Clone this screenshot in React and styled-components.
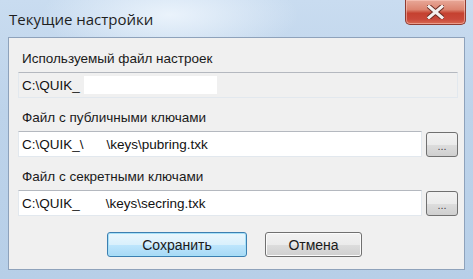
import React from "react";
import styled, { createGlobalStyle } from "styled-components";

const GlobalStyle = createGlobalStyle`
  html, body {
    margin: 0;
    padding: 0;
    background: #ffffff;
  }
  body {
    font-family: "Liberation Sans", Arial, sans-serif;
  }
`;

const Window = styled.div`
  width: 473px;
  height: 279px;
  box-sizing: border-box;
  display: flex;
  flex-direction: column;
  padding: 0 8px 9px 8px;
  background: linear-gradient(180deg, #c9dcf0 0%, #bdd3ea 40%, #b7cfe8 100%);
  overflow: hidden;
  position: relative;
`;

const Glow = styled.div`
  position: absolute;
  left: 40px;
  top: -30px;
  width: 260px;
  height: 90px;
  background: radial-gradient(ellipse at center, rgba(236, 244, 252, 0.95) 0%, rgba(236, 244, 252, 0) 70%);
  pointer-events: none;
`;

const TitleBar = styled.div`
  height: 37px;
  display: flex;
  justify-content: space-between;
  align-items: flex-start;
  position: relative;
`;

const Title = styled.div`
  margin-top: 9px;
  margin-left: 1px;
  font-family: "Open Sans", "Noto Sans", sans-serif;
  font-size: 15px;
  line-height: 20px;
  color: #1e1e1e;
`;

const CloseButton = styled.div`
  width: 61px;
  height: 25px;
  margin-right: -1px;
  box-sizing: border-box;
  border: 1px solid #8f3b30;
  border-top: none;
  border-radius: 0 0 5px 5px;
  background: linear-gradient(180deg, #e8a898 0%, #dc8470 40%, #c54130 55%, #c9483a 80%, #d86a52 100%);
  box-shadow: inset 0 0 0 1px rgba(255, 210, 200, 0.5);
  display: flex;
  align-items: center;
  justify-content: center;
`;

const Client = styled.div`
  flex: 1;
  background: #f0f0f0;
  border: 1px solid #8ea2bb;
  display: flex;
  flex-direction: column;
  padding: 11px 6px 0 9px;
  position: relative;
`;

const Section = styled.div`
  display: flex;
  flex-direction: column;
  margin-bottom: 10px;
`;

const Label = styled.div`
  height: 20px;
  line-height: 20px;
  padding-left: 4px;
  margin-bottom: 3px;
  font-size: 13.5px;
  color: #1a1a1a;
  white-space: nowrap;
`;

const FieldRow = styled.div`
  display: flex;
  align-items: center;
  gap: 4px;
`;

const Field = styled.div`
  flex: 1;
  height: 26px;
  box-sizing: border-box;
  border: 1px solid #e2e8ee;
  border-top-color: #b4b8bf;
  background: ${(p) => (p.$readOnly ? "#f0f0f0" : "#ffffff")};
  display: flex;
  align-items: center;
  padding-left: 3px;
  font-size: 13.5px;
  color: #111;
  white-space: nowrap;
  overflow: hidden;
`;

const Redact = styled.span`
  display: inline-block;
  width: ${(p) => p.$w}px;
  height: 18px;
  margin-left: ${(p) => p.$ml || 0}px;
  background: ${(p) => (p.$white ? "#ffffff" : "transparent")};
`;

const BrowseButton = styled.button`
  width: 32px;
  height: 25px;
  box-sizing: border-box;
  border: 1px solid #707070;
  border-radius: 3px;
  background: linear-gradient(180deg, #f2f2f2 0%, #ebebeb 50%, #dddddd 51%, #cfcfcf 100%);
  font-family: "Liberation Sans", sans-serif;
  font-size: 11px;
  color: #444;
  padding: 0;
  padding-top: 3px;
  line-height: 12px;
`;

const ButtonRow = styled.div`
  display: flex;
  gap: 18px;
  padding-left: 89px;
  margin-top: 6px;
`;

const DialogButton = styled.button`
  width: ${(p) => p.$w}px;
  height: 25px;
  box-sizing: border-box;
  border: 1px solid ${(p) => (p.$default ? "#3c7fb1" : "#707070")};
  border-radius: 3px;
  background: ${(p) =>
    p.$default
      ? "linear-gradient(180deg, #eaf6fd 0%, #d9f0fc 50%, #bee6fd 51%, #a7d9f5 100%)"
      : "linear-gradient(180deg, #f2f2f2 0%, #ebebeb 50%, #dddddd 51%, #cfcfcf 100%)"};
  box-shadow: ${(p) => (p.$default ? "inset 0 0 0 1px #a6e0f8" : "inset 0 0 0 1px #fbfbfb")};
  font-family: "Liberation Sans", sans-serif;
  font-size: 14px;
  color: #1a1a1a;
  padding: 0;
`;

const CloseIcon = () => (
  <svg width="17" height="14" viewBox="0 0 17 14">
    <path
      d="M2 1.5 L15 12.5 M15 1.5 L2 12.5"
      stroke="#6b2a22"
      strokeWidth="5"
      strokeLinecap="square"
      fill="none"
    />
    <path
      d="M2 1.5 L15 12.5 M15 1.5 L2 12.5"
      stroke="#f4f0ee"
      strokeWidth="3"
      strokeLinecap="square"
      fill="none"
    />
  </svg>
);

export default function App() {
  return (
    <>
      <GlobalStyle />
      <Window>
        <Glow />
        <TitleBar>
          <Title>Текущие настройки</Title>
          <CloseButton>
            <CloseIcon />
          </CloseButton>
        </TitleBar>
        <Client>
          <Section>
            <Label>Используемый файл настроек</Label>
            <FieldRow>
              <Field $readOnly>
                C:\QUIK_<Redact $w={133} $ml={4} $white />
              </Field>
            </FieldRow>
          </Section>
          <Section>
            <Label>Файл с публичными ключами</Label>
            <FieldRow>
              <Field>
                C:\QUIK_\<Redact $w={23} />\keys\pubring.txk
              </Field>
              <BrowseButton>...</BrowseButton>
            </FieldRow>
          </Section>
          <Section>
            <Label>Файл с секретными ключами</Label>
            <FieldRow>
              <Field>
                C:\QUIK_<Redact $w={26} />\keys\secring.txk
              </Field>
              <BrowseButton>...</BrowseButton>
            </FieldRow>
          </Section>
          <ButtonRow>
            <DialogButton $default $w={140}>
              Сохранить
            </DialogButton>
            <DialogButton $w={97}>Отмена</DialogButton>
          </ButtonRow>
        </Client>
      </Window>
    </>
  );
}
